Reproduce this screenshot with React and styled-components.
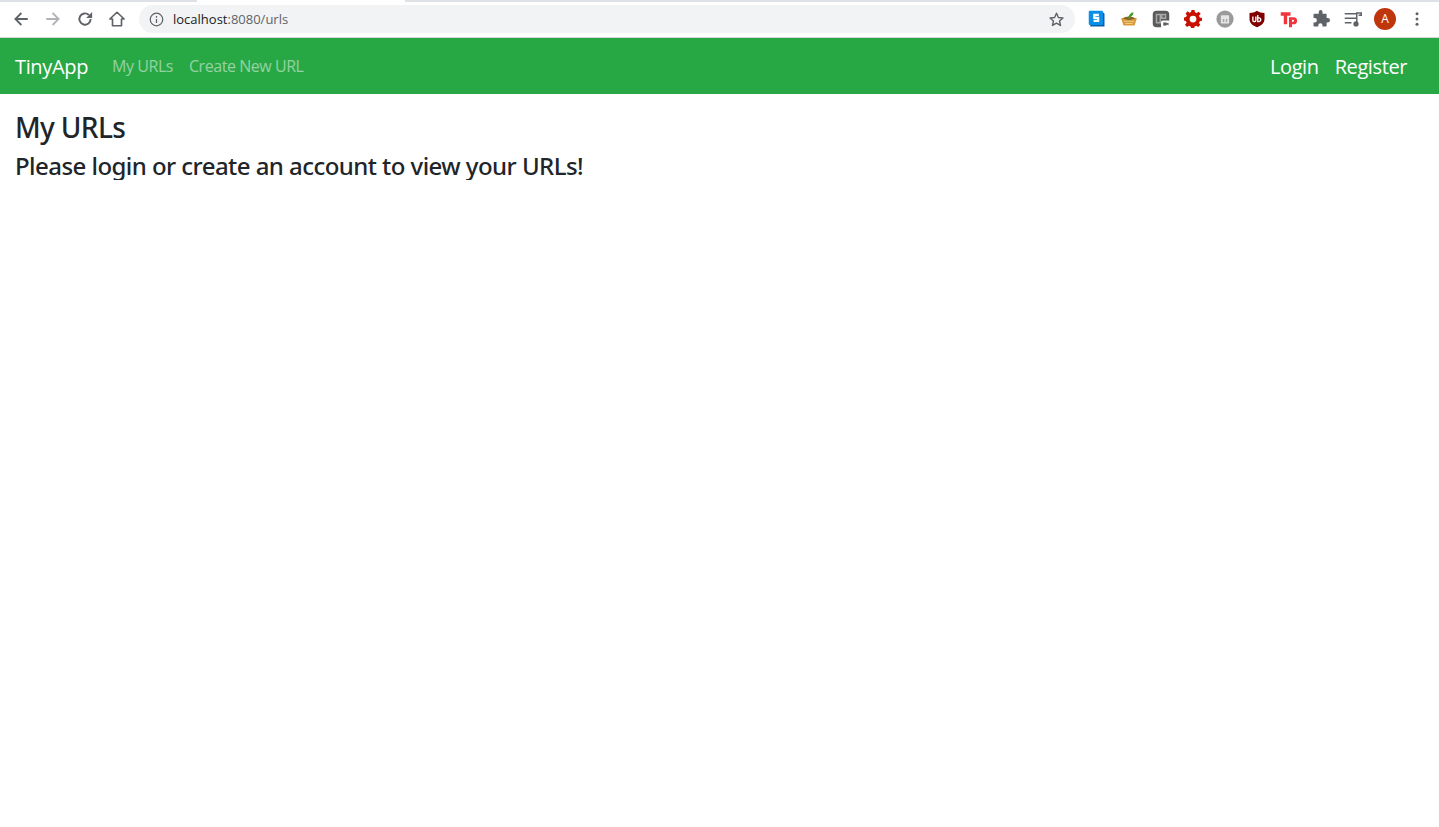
import React from "react"
import styled, { createGlobalStyle } from "styled-components"

const PageStyle = createGlobalStyle`
  html, body {
    margin: 0;
    padding: 0;
    background: #fff;
    font-family: "Open Sans", "Noto Sans", "Liberation Sans", sans-serif;
    color: #212529;
  }
`

const TabStrip = styled.div`
  display: flex;
  height: 2px;
`

const TabEdge = styled.div`
  height: 2px;
  background: #dee1e6;
  width: ${(p) => p.$width || "auto"};
  flex: ${(p) => (p.$width ? "none" : "1")};
  margin-left: ${(p) => p.$gap || 0};
`

const Toolbar = styled.div`
  display: flex;
  align-items: center;
  height: 34px;
  padding: 0 6px 1px 5px;
  border-bottom: 1px solid #d3d5d8;
  background: #fff;
`

const Slot = styled.div`
  width: 32px;
  height: 32px;
  flex: none;
  display: flex;
  align-items: center;
  justify-content: center;
  color: ${(p) => p.$color || "#5f6368"};
`

const Omnibox = styled.div`
  flex: 1;
  height: 28px;
  margin: 0 6px;
  border-radius: 14px;
  background: #f1f3f4;
  display: flex;
  align-items: center;
  padding: 0 10px 0 10px;
  color: #5f6368;
`

const Url = styled.span`
  flex: 1;
  margin-left: 9px;
  font-family: "Open Sans", sans-serif;
  font-size: 13px;
  color: #5f6368;

  b {
    font-weight: 400;
    color: #202124;
  }
`

const Avatar = styled.div`
  width: 22px;
  height: 22px;
  border-radius: 50%;
  background: #bf360c;
  color: #fff;
  font-size: 12px;
  line-height: 22px;
  text-align: center;
`

const Navbar = styled.nav`
  display: flex;
  align-items: center;
  height: 56px;
  padding: 0 16px 0 15px;
  background: #28a745;
`

const Brand = styled.a`
  font-size: 20px;
  color: #fff;
  margin-right: 24px;
  letter-spacing: -0.35px;
`

const NavLink = styled.a`
  font-size: ${(p) => (p.$big ? "20px" : "16px")};
  color: ${(p) => (p.$big ? "#fff" : "rgba(255, 255, 255, 0.5)")};
  margin-right: 16px;
  letter-spacing: ${(p) => (p.$big ? "-0.4px" : "-0.45px")};
`

const NavRight = styled.div`
  margin-left: auto;
  display: flex;
`

const Main = styled.main`
  padding: 0 15px;
`

const Title = styled.h3`
  margin: 17px 0 7px 0;
  font-family: "Noto Sans", sans-serif;
  font-size: 28px;
  line-height: 33.6px;
  font-weight: 500;
  letter-spacing: -0.65px;
`

const Message = styled.h4`
  margin: 0;
  font-family: "Noto Sans", sans-serif;
  font-size: 24px;
  line-height: 28.8px;
  font-weight: 500;
  letter-spacing: -0.55px;
`

const Icon = ({ size = 18, children, vb = 24, ...rest }) => (
  <svg width={size} height={size} viewBox={`0 0 ${vb} ${vb}`} {...rest}>
    {children}
  </svg>
)

function Browser() {
  return (
    <>
      <TabStrip>
        <TabEdge $width="197px" />
        <TabEdge $gap="208px" />
      </TabStrip>
      <Toolbar>
        <Slot>
          <Icon>
            <path d="M21 12H5M12.500 4 4.500 12l8 8" fill="none" stroke="currentColor" strokeWidth="2.400" />
          </Icon>
        </Slot>
        <Slot $color="#b1b3b6">
          <Icon>
            <path d="M3 12h16M11.500 4l8 8-8 8" fill="none" stroke="currentColor" strokeWidth="2.400" />
          </Icon>
        </Slot>
        <Slot>
          <Icon>
            <path d="M19.500 12a7.500 7.500 0 1 1-2.300-5.400" fill="none" stroke="currentColor" strokeWidth="2.600" />
            <path d="M21.500 2.500V10.500h-8z" fill="currentColor" />
          </Icon>
        </Slot>
        <Slot>
          <Icon>
            <path d="M12 3 2.500 12H6v9h12v-9h3.500z" fill="none" stroke="currentColor" strokeWidth="2.200" strokeLinejoin="round" />
          </Icon>
        </Slot>
        <Omnibox>
          <Icon size={15}>
            <circle cx="12" cy="12" r="10" fill="none" stroke="currentColor" strokeWidth="2" />
            <path d="M11 11h2v6.500h-2zM11 6.500h2v2.500h-2z" fill="currentColor" />
          </Icon>
          <Url>
            <b>localhost</b>:8080/urls
          </Url>
          <Icon size={17}>
            <path
              d="M12 3.200l2.700 5.900 6.400.7-4.800 4.300 1.400 6.300L12 17.100l-5.700 3.300 1.400-6.300-4.800-4.300 6.400-.7z"
              fill="none"
              stroke="currentColor"
              strokeWidth="2"
              strokeLinejoin="round"
            />
          </Icon>
        </Omnibox>
        <Slot>
          <Icon>
            <path d="M3 2h16l3 3v17H3z" fill="#0b5fa8" />
            <rect x="1" y="1" width="19" height="19" rx="1.500" fill="#0a8fe8" />
            <path d="M14.500 6.500h-6v4h5v4h-6" fill="none" stroke="#fff" strokeWidth="3" />
          </Icon>
        </Slot>
        <Slot>
          <Icon>
            <path d="M1.500 11 12 9l10.500 2-3 9.500h-15z" fill="#d99a3e" />
            <path d="M4 11.500c3-4 13-4 16 0l-8 2z" fill="#8a6426" />
            <path d="M11 12c0-5 3-8 7-9 0 4-2 5-4 6l-1 3z" fill="#3f9a2c" />
            <path d="M5 15l14 0M7 18l10 0" stroke="#f2cf8a" strokeWidth="1.200" />
          </Icon>
        </Slot>
        <Slot>
          <Icon>
            <rect x="1" y="1" width="22" height="22" rx="5" fill="#5a5a5a" />
            <path d="M6 6h5v11H6zM13 6h5v5h-5z" fill="none" stroke="#a8a8a8" strokeWidth="2" />
            <rect x="12" y="14" width="12" height="10" rx="2" fill="#fff" />
            <path d="M15 16.500h4.500v4H15zM19.500 18l2.500-1.500v4L19.500 19z" fill="#5a5a5a" />
          </Icon>
        </Slot>
        <Slot>
          <Icon>
            <path
              d="M10 1h4l.6 3 2.300 1 2.600-1.700 2.800 2.800L20 8.700l1 2.300 3 .6v3.800l-3 .6-1 2.300 1.700 2.500-2.800 2.800-2.500-1.700-2.300 1-.6 3h-4l-.6-3-2.300-1-2.500 1.700-2.800-2.800L3.500 18l-1-2.300L0 15v-4l2.800-.6 1-2.300L2.100 5.600l2.800-2.800L7.100 4.500l2.300-1z"
              fill="#c90f00"
              transform="translate(0 -1)"
            />
            <circle cx="12" cy="12" r="4.500" fill="#fff" />
          </Icon>
        </Slot>
        <Slot>
          <Icon>
            <circle cx="12" cy="12" r="11.500" fill="#9a9a9a" />
            <rect x="6.500" y="7" width="11" height="11" rx="1" fill="#e6e6e6" />
            <path d="M9 12h2v4H9zM13 12h2v4h-2z" fill="#a8a8a8" />
          </Icon>
        </Slot>
        <Slot>
          <Icon>
            <path d="M12 1c3 2 6 3 10 3v8c0 5-4 9-10 11C6 21 2 17 2 12V4c4 0 7-1 10-3z" fill="#800000" />
            <path d="M6.500 8.500v5a2 2 0 0 0 4 0v-5M13 6.500v9h1.500a2.500 2.500 0 0 0 0-5H13" fill="none" stroke="#fff" strokeWidth="1.800" />
          </Icon>
        </Slot>
        <Slot>
          <Icon>
            <path d="M1 3h13v4.500H9.500V19h-4.500V7.500H1z" fill="#f0353c" />
            <path d="M12 23V9.500h6a4.800 4.800 0 0 1 0 9.600h-2V23zM16 13v2.600h1.500a1.300 1.300 0 0 0 0-2.600z" fill="#f0353c" fillRule="evenodd" />
          </Icon>
        </Slot>
        <Slot>
          <Icon>
            <path
              d="M9 2.500a2.500 2.500 0 0 1 5 0V5h4.500a1 1 0 0 1 1 1v4.500h1.500a3 3 0 0 1 0 6h-1.500V21a1 1 0 0 1-1 1h-4.500v-1.500a2.800 2.800 0 0 0-5.600 0V22H3a1 1 0 0 1-1-1v-4.500h1.500a3 3 0 0 0 0-6H2V6a1 1 0 0 1 1-1h6z"
              fill="currentColor"
            />
          </Icon>
        </Slot>
        <Slot>
          <Icon>
            <path d="M1 5h15M1 11h15M1 17h9" stroke="currentColor" strokeWidth="2" />
            <path d="M17 18V4h6v3h-3.500" fill="none" stroke="currentColor" strokeWidth="2" />
            <circle cx="16" cy="18.500" r="3.500" fill="currentColor" />
          </Icon>
        </Slot>
        <Slot>
          <Avatar>A</Avatar>
        </Slot>
        <Slot>
          <Icon>
            <circle cx="12" cy="5" r="2" fill="currentColor" />
            <circle cx="12" cy="12" r="2" fill="currentColor" />
            <circle cx="12" cy="19" r="2" fill="currentColor" />
          </Icon>
        </Slot>
      </Toolbar>
    </>
  )
}

export default function App() {
  return (
    <>
      <PageStyle />
      <Browser />
      <Navbar>
        <Brand>TinyApp</Brand>
        <NavLink>My URLs</NavLink>
        <NavLink>Create New URL</NavLink>
        <NavRight>
          <NavLink $big>Login</NavLink>
          <NavLink $big>Register</NavLink>
        </NavRight>
      </Navbar>
      <Main>
        <Title>My URLs</Title>
        <Message>Please login or create an account to view your URLs!</Message>
      </Main>
    </>
  )
}
